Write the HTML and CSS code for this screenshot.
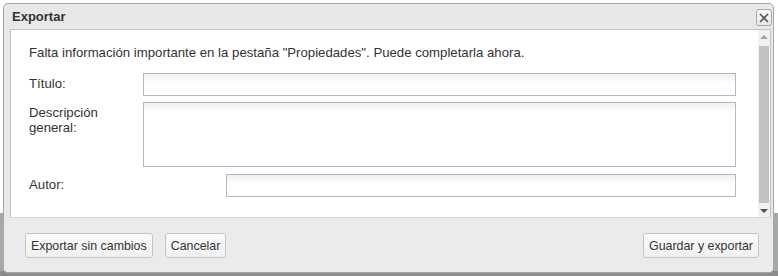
FILE: index.html
```html
<!DOCTYPE html>
<html lang="es">
<head>
<meta charset="utf-8">
<title>Exportar</title>
<link rel="stylesheet" href="styles.css">
</head>
<body>
<div class="dialog">
  <div class="titlebar">
    <span class="title">Exportar</span>
    <button class="close" aria-label="Cerrar">
      <svg width="10" height="10" viewBox="0 0 10 10"><path d="M1 1 L9 9 M9 1 L1 9" stroke="#555" stroke-width="1.6" fill="none"/></svg>
    </button>
  </div>
  <div class="content">
    <div class="inner">
      <p class="intro">Falta información importante en la pestaña "Propiedades". Puede completarla ahora.</p>
      <div class="row">
        <label class="label">Título:</label>
        <input class="field" type="text">
      </div>
      <div class="row">
        <label class="label">Descripción<br>general:</label>
        <textarea class="field area"></textarea>
      </div>
      <div class="row">
        <label class="label">Autor:</label>
        <input class="field author" type="text">
      </div>
    </div>
    <div class="scrollbar">
      <span class="arrow up"></span>
      <span class="thumb"></span>
      <span class="arrow down"></span>
    </div>
  </div>
  <div class="footer">
    <button class="btn">Exportar sin cambios</button>
    <button class="btn">Cancelar</button>
    <span class="spacer"></span>
    <button class="btn">Guardar y exportar</button>
  </div>
</div>
</body>
</html>
```
FILE: styles.css
```css
html, body {
  margin: 0;
  padding: 0;
}
body {
  width: 778px;
  height: 276px;
  padding: 3px 0 0 3px;
  box-sizing: border-box;
  background: linear-gradient(to bottom, #ffffff 0, #ffffff 213px, #a3aba9 213px, #a3aba9 271px, #8c8c8c 271px);
  font-family: "Liberation Sans", Arial, sans-serif;
  font-size: 13.2px;
  color: #333;
}
.dialog {
  width: 771px;
  height: 270px;
  box-sizing: border-box;
  border: 1px solid #a6a6a6;
  border-radius: 5px;
  background: #e8e8e8;
  display: flex;
  flex-direction: column;
  overflow: hidden;
}
.titlebar {
  height: 25px;
  display: flex;
  align-items: center;
  padding: 0 1px 0 8px;
  flex: none;
}
.title {
  font-weight: bold;
  font-size: 13px;
  color: #333;
  flex: 1;
}
.close {
  width: 16px;
  height: 17px;
  padding: 0;
  border: 1px solid #a9a9a9;
  border-radius: 3px;
  background: linear-gradient(#fafafa, #e9e9e9);
  display: flex;
  align-items: center;
  justify-content: center;
  margin-top: 2px;
}
.content {
  margin: 0 2px 0 6px;
  height: 189px;
  box-sizing: border-box;
  border: 1px solid #c9c1c1;
  border-bottom-color: #d8d4d4;
  background: #fff;
  display: flex;
  flex: none;
}
.inner {
  flex: 1;
  padding: 15px 22px 0 18px;
}
.intro {
  margin: 0;
  line-height: 16px;
}
.row {
  display: flex;
  align-items: flex-start;
}
.row:nth-of-type(1) { margin-top: 12px; }
.row + .row { margin-top: 6px; }
.row:last-child { margin-top: 7px; }
.label {
  width: 114px;
  flex: none;
  padding-top: 3px;
  line-height: 15px;
}
.field {
  flex: 1;
  height: 23px;
  box-sizing: border-box;
  margin: 0;
  border: 1px solid #b6b5c9;
  border-radius: 0;
  background: linear-gradient(#f0f0f0, #ffffff 9px);
  font: inherit;
  padding: 2px 4px;
}
.area {
  height: 65px;
  resize: none;
}
.author {
  margin-left: 83px;
}
.scrollbar {
  width: 12px;
  flex: none;
  background: #f1f1f1;
  display: flex;
  flex-direction: column;
  align-items: center;
}
.thumb {
  width: 10px;
  flex: 1;
  background: #c1c1c1;
  margin: 1px 0;
}
.arrow {
  width: 0;
  height: 0;
  border-left: 4px solid transparent;
  border-right: 4px solid transparent;
  flex: none;
}
.arrow.up {
  border-bottom: 4px solid #a3a3a3;
  margin: 5px 0 6px;
}
.arrow.down {
  border-top: 4px solid #505050;
  margin: 5px 0 4px;
}
.footer {
  flex: 1;
  background: #ebebeb;
  display: flex;
  align-items: flex-start;
  padding: 15px 14px 0 21px;
  gap: 12px;
}
.spacer { flex: 1; }
.btn {
  height: 25px;
  box-sizing: border-box;
  border: 1px solid #c5c5c5;
  border-radius: 3px;
  background: linear-gradient(#fbfbfb, #f0f0f0);
  font-family: inherit;
  font-size: 12.4px;
  color: #333;
  padding: 0 5px;
  margin: 0;
}
```
